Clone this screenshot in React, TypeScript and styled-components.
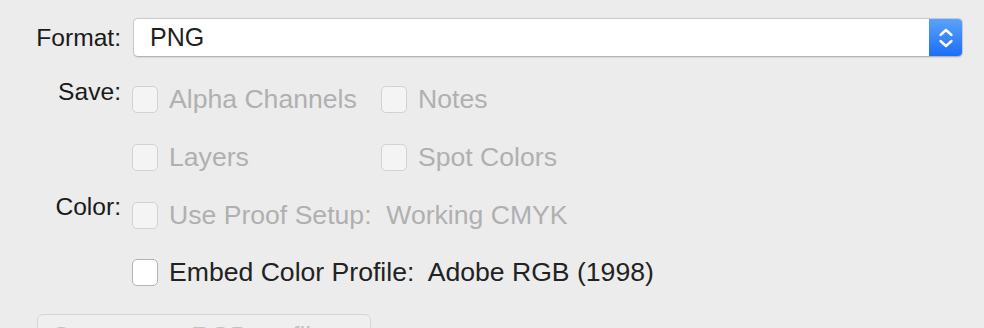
import styled, { createGlobalStyle } from "styled-components";

const GlobalStyle = createGlobalStyle`
  html, body {
    margin: 0;
    padding: 0;
    background: #ececec;
    overflow: hidden;
  }
  body {
    font-family: "Liberation Sans", Arial, sans-serif;
  }
`;

const Panel = styled.div`
  width: 984px;
  height: 328px;
  box-sizing: border-box;
  padding-top: 18px;
  overflow: hidden;
  background: #ececec;
`;

const Row = styled.div<{ $center?: boolean; $mt?: number }>`
  display: flex;
  align-items: ${(p) => (p.$center ? "center" : "flex-start")};
  margin-top: ${(p) => p.$mt ?? 0}px;
`;

const Label = styled.div<{ $center?: boolean }>`
  width: 121px;
  flex: none;
  text-align: right;
  font-size: 24.6px;
  line-height: ${(p) => (p.$center ? "30px" : "14px")};
  color: #1a1a1a;
`;

const Controls = styled.div`
  margin-left: 11px;
  flex: 1;
`;

const Select = styled.div`
  box-sizing: border-box;
  width: 830px;
  height: 39px;
  margin-left: 1px;
  display: flex;
  align-items: center;
  background: #fff;
  border: 1px solid #c9c9c9;
  border-bottom-color: #b4b4b4;
  border-radius: 5px;
  box-shadow: 0 0.5px 1px rgba(0, 0, 0, 0.08);
  overflow: hidden;
`;

const SelectValue = styled.span`
  flex: 1;
  padding-left: 16px;
  font-size: 25px;
  color: #1f1f1f;
`;

const Stepper = styled.div`
  width: 33px;
  align-self: stretch;
  display: flex;
  align-items: center;
  justify-content: center;
  background: linear-gradient(#5ba2fb, #1b6ef6);
`;

const OptionGrid = styled.div`
  display: grid;
  grid-template-columns: 249px auto;
  row-gap: 27.5px;
`;

const Option = styled.label<{ $disabled?: boolean }>`
  display: flex;
  align-items: center;
  height: 30px;
  font-size: 26.6px;
  white-space: pre;
  color: ${(p) => (p.$disabled ? "#b0b0b0" : "#222")};
`;

const Box = styled.span<{ $disabled?: boolean }>`
  box-sizing: border-box;
  width: 26px;
  height: 27px;
  margin-right: 11px;
  flex: none;
  border-radius: 5px;
  background: ${(p) => (p.$disabled ? "#f4f4f4" : "#fff")};
  border: 1px solid ${(p) => (p.$disabled ? "#d2d2d2" : "#b4b4b4")};
`;

const Button = styled.div`
  box-sizing: border-box;
  width: 334px;
  height: 44px;
  margin: 26px 0 0 37px;
  padding: 1px 0 0 13px;
  border: 1px solid #d6d6d6;
  border-radius: 6px;
  background: #efefef;
  font-size: 26px;
  line-height: 40px;
  color: #c2c2c2;
`;

function Chevrons() {
  return (
    <svg width="16" height="24" viewBox="0 0 16 24" fill="none">
      <path d="M2.5 9 L8 4 L13.5 9" stroke="#fff" strokeWidth="2.4" strokeLinecap="round" strokeLinejoin="round" />
      <path d="M2.5 15 L8 20 L13.5 15" stroke="#fff" strokeWidth="2.4" strokeLinecap="round" strokeLinejoin="round" />
    </svg>
  );
}

function Check({ label, disabled }: { label: string; disabled?: boolean }) {
  return (
    <Option $disabled={disabled}>
      <Box $disabled={disabled} />
      {label}
    </Option>
  );
}

export default function App() {
  return (
    <>
      <GlobalStyle />
      <Panel>
        <Row $center>
          <Label $center>Format:</Label>
          <Controls>
            <Select>
              <SelectValue>PNG</SelectValue>
              <Stepper>
                <Chevrons />
              </Stepper>
            </Select>
          </Controls>
        </Row>

        <Row $mt={27.5}>
          <Label>Save:</Label>
          <Controls>
            <OptionGrid>
              <Check label="Alpha Channels" disabled />
              <Check label="Notes" disabled />
              <Check label="Layers" disabled />
              <Check label="Spot Colors" disabled />
            </OptionGrid>
          </Controls>
        </Row>

        <Row $mt={28}>
          <Label>Color:</Label>
          <Controls>
            <OptionGrid>
              <Check label="Use Proof Setup:  Working CMYK" disabled />
              <span />
              <Check label="Embed Color Profile:  Adobe RGB (1998)" />
            </OptionGrid>
          </Controls>
        </Row>

        <Button>Convert to sRGB profile</Button>
      </Panel>
    </>
  );
}
